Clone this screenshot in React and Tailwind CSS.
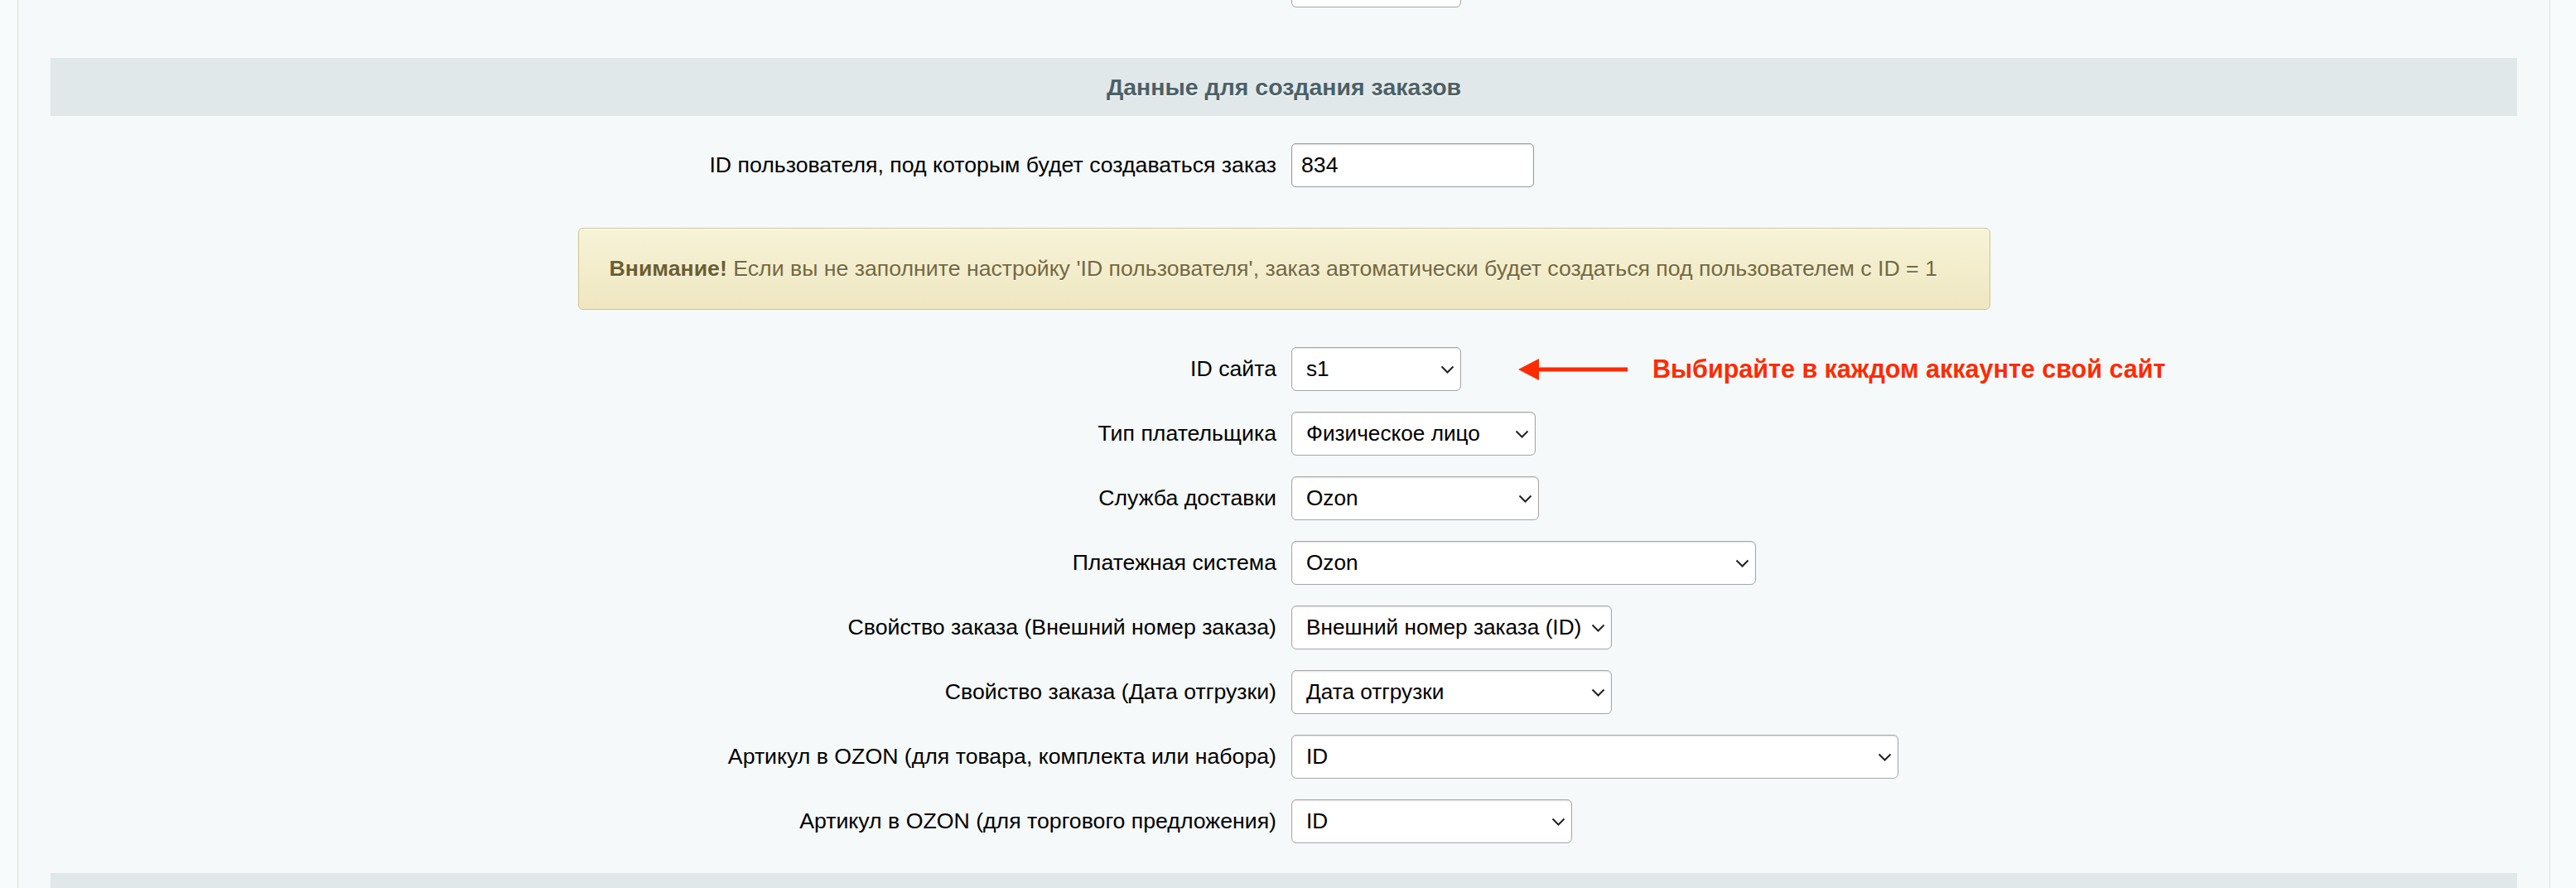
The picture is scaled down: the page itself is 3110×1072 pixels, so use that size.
import React from "react";

const Chevron = () => (
  <svg
    className="pointer-events-none absolute right-[8px] top-1/2 -translate-y-1/2"
    width="17"
    height="10"
    viewBox="0 0 17 10"
    fill="none"
  >
    <polyline points="1.5,1.5 8.5,8.5 15.5,1.5" stroke="#222" strokeWidth="2" />
  </svg>
);

const Select = ({ value, width }) => (
  <div className={`relative h-[53px] ${width}`}>
    <select
      defaultValue={value}
      className="h-full w-full appearance-none rounded-[6px] border border-[#a6a6a6] bg-white pl-[17px] pr-[24px] text-[26.2px] text-black shadow-[inset_0_1px_2px_rgba(0,0,0,0.12)] outline-none"
    >
      <option>{value}</option>
    </select>
    <Chevron />
  </div>
);

const Row = ({ label, children, className = "" }) => (
  <div className={`grid grid-cols-2 items-center ${className}`}>
    <div className="pr-[9px] text-right">{label}</div>
    <div className="flex items-center pl-[9px]">{children}</div>
  </div>
);

const rows = [
  { label: "Тип плательщика", value: "Физическое лицо", width: "w-[295px]" },
  { label: "Служба доставки", value: "Ozon", width: "w-[299px]" },
  { label: "Платежная система", value: "Ozon", width: "w-[561px]" },
  { label: "Свойство заказа (Внешний номер заказа)", value: "Внешний номер заказа (ID)", width: "w-[387px]" },
  { label: "Свойство заказа (Дата отгрузки)", value: "Дата отгрузки", width: "w-[387px]" },
  { label: "Артикул в OZON (для товара, комплекта или набора)", value: "ID", width: "w-[733px]" },
  { label: "Артикул в OZON (для торгового предложения)", value: "ID", width: "w-[339px]" },
];

export default function App() {
  return (
    <div className="h-[1072px] overflow-hidden bg-[#f8fbfb] font-['Liberation_Sans',Arial,sans-serif] text-[26.7px] text-black">
      <div className="ml-[21px] min-h-[1072px] w-[3058px] border-x border-[#d6e0e3] bg-[#f5f9f9] px-[39px]">
        {/* previous setting, cut off at the top */}
        <Row className="-mt-[44px]" label="">
          <Select value="" width="w-[205px]" />
        </Row>

        <div className="mt-[61px] flex h-[70px] items-center justify-center bg-[#e0e8ea] text-[28.5px] font-bold text-[#4b6065] [text-shadow:0_1px_0_#fff]">
          Данные для создания заказов
        </div>

        <Row className="mt-[33px]" label="ID пользователя, под которым будет создаваться заказ">
          <input
            defaultValue="834"
            className="h-[53px] w-[293px] rounded-[5px] border border-[#8f9aa6] bg-white px-[11px] text-[26.7px] text-black shadow-[inset_0_1px_2px_rgba(0,0,0,0.12)] outline-none"
          />
        </Row>

        <div className="mx-auto mt-[49px] flex h-[99px] w-[1705px] items-center rounded-[6px] border border-[#d0c292] bg-gradient-to-b from-[#f7f3d8] to-[#efe7c0] pl-[37px] text-[#74683c] shadow-[inset_0_1px_0_#fff] [text-shadow:0_1px_0_rgba(255,255,255,0.8)]">
          <span>
            <b className="text-[#6b5e2e]">Внимание!</b> Если вы не заполните настройку 'ID пользователя', заказ автоматически будет создаться под пользователем с ID = 1
          </span>
        </div>

        <div className="mt-[45px] flex flex-col gap-[25px]">
          <Row label="ID сайта">
            <Select value="s1" width="w-[205px]" />
            <svg className="ml-[69px]" width="132" height="26" viewBox="0 0 132 26">
              <polygon points="0,13 25,0 25,26" fill="#ff2a00" />
              <rect x="22" y="10.5" width="110" height="5" fill="#ff2a00" />
            </svg>
            <span className="ml-[30px] text-[30.5px] font-bold text-[#ff2a00]">
              Выбирайте в каждом аккаунте свой сайт
            </span>
          </Row>
          {rows.map((r) => (
            <Row key={r.label} label={r.label}>
              <Select value={r.value} width={r.width} />
            </Row>
          ))}
        </div>

        <div className="mt-[36px] h-[70px] bg-[#e0e8ea]" />
      </div>
    </div>
  );
}
